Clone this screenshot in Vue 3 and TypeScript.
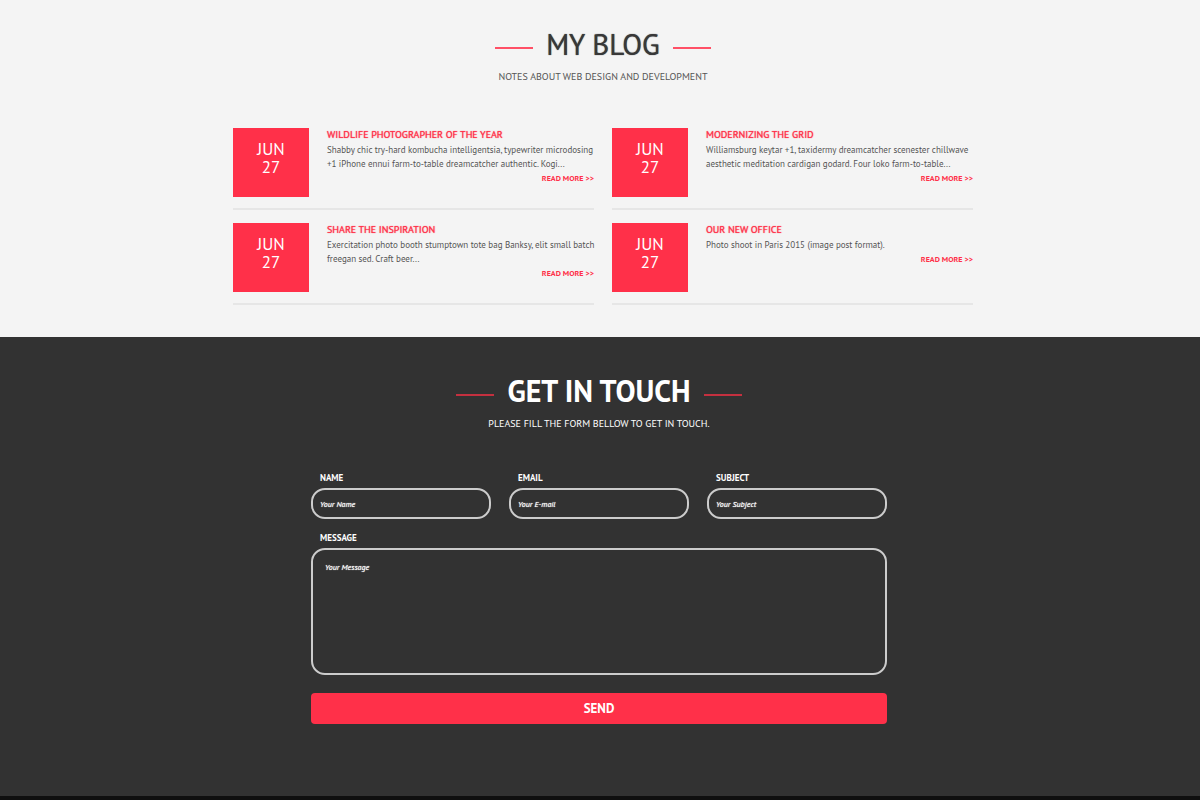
<script setup lang="ts">
import { ref } from 'vue'

interface Post {
  month: string
  day: string
  title: string
  excerpt: string
}

const posts: Post[] = [
  {
    month: 'JUN',
    day: '27',
    title: 'Wildlife photographer of the year',
    excerpt:
      'Shabby chic try-hard kombucha intelligentsia, typewriter microdosing +1 iPhone ennui farm-to-table dreamcatcher authentic. Kogi...',
  },
  {
    month: 'JUN',
    day: '27',
    title: 'Modernizing the grid',
    excerpt:
      'Williamsburg keytar +1, taxidermy dreamcatcher scenester chillwave aesthetic meditation cardigan godard. Four loko farm-to-table...',
  },
  {
    month: 'JUN',
    day: '27',
    title: 'Share the inspiration',
    excerpt:
      'Exercitation photo booth stumptown tote bag Banksy, elit small batch freegan sed. Craft beer...',
  },
  {
    month: 'JUN',
    day: '27',
    title: 'Our new office',
    excerpt: 'Photo shoot in Paris 2015 (image post format).',
  },
]

const fields = [
  { id: 'name', label: 'Name', type: 'text', placeholder: 'Your Name' },
  { id: 'email', label: 'Email', type: 'email', placeholder: 'Your E-mail' },
  { id: 'subject', label: 'Subject', type: 'text', placeholder: 'Your Subject' },
]

const values = ref<Record<string, string>>({ name: '', email: '', subject: '' })
const message = ref('')
</script>

<template>
  <main class="page">
    <section class="blog">
      <header class="heading">
        <h2>My Blog</h2>
        <p>Notes about web design and development</p>
      </header>
      <div class="posts">
        <article v-for="post in posts" :key="post.title" class="post">
          <time class="date">
            <span>{{ post.month }}</span>
            <span>{{ post.day }}</span>
          </time>
          <div class="body">
            <h3>{{ post.title }}</h3>
            <p>{{ post.excerpt }}</p>
            <a href="#">Read more &gt;&gt;</a>
          </div>
        </article>
      </div>
    </section>

    <section class="contact">
      <header class="heading">
        <h2>Get in touch</h2>
        <p>Please fill the form bellow to get in touch.</p>
      </header>
      <form class="form" @submit.prevent>
        <div class="row">
          <div v-for="field in fields" :key="field.id" class="field">
            <label :for="field.id">{{ field.label }}</label>
            <input
              :id="field.id"
              v-model="values[field.id]"
              :type="field.type"
              :placeholder="field.placeholder"
            />
          </div>
        </div>
        <div class="field">
          <label for="message">Message</label>
          <textarea id="message" v-model="message" placeholder="Your Message"></textarea>
        </div>
        <button type="submit">Send</button>
      </form>
    </section>
    <footer class="footer"></footer>
  </main>
</template>

<style>
body {
  margin: 0;
  background: #0f0f0f;
}
</style>

<style scoped>
.page {
  font-family: 'PT Sans', 'Noto Sans', sans-serif;
  font-size: 9px;
  color: #555;
}
.page * {
  box-sizing: border-box;
}
h2,
h3,
p {
  margin: 0;
}
.blog {
  padding: 26px 20px 32px 26px;
  background: #f4f4f4;
}
.heading {
  text-align: center;
  text-transform: uppercase;
}
.heading h2 {
  display: flex;
  align-items: center;
  justify-content: center;
  gap: 13px;
  font-size: 29px;
  line-height: 36px;
  font-weight: 400;
  color: #383838;
  text-shadow: 0 0 1px currentColor;
}
.heading h2::before,
.heading h2::after {
  content: '';
  width: 38px;
  height: 2px;
  margin-top: 8px;
  background: #ff5066;
}
.heading p {
  margin-top: 8px;
  font-size: 10px;
  line-height: 14px;
}
.posts {
  display: grid;
  grid-template-columns: 1fr 1fr;
  gap: 13px 18px;
  max-width: 740px;
  margin: 44px auto 0;
}
.post {
  display: flex;
  align-items: flex-start;
  gap: 18px;
  padding-bottom: 11px;
  border-bottom: 2px solid #e6e6e6;
}
.date {
  flex: none;
  display: flex;
  flex-direction: column;
  width: 76px;
  height: 69px;
  padding-top: 12px;
  background: #ff3049;
  color: #fff;
  font-size: 17px;
  line-height: 18px;
  text-align: center;
}
.body {
  flex: 1;
  display: flex;
  flex-direction: column;
  line-height: 14px;
}
.body h3 {
  margin-bottom: 1px;
  font-size: 10px;
  line-height: 14px;
  font-weight: 400;
  text-transform: uppercase;
  color: #ff3049;
  text-shadow: 0 0 1px currentColor;
}
.body p {
  margin-right: -6px;
}
.body a {
  align-self: flex-end;
  font-size: 8px;
  font-weight: 600;
  text-transform: uppercase;
  text-decoration: none;
  color: #ff3049;
}
.contact {
  padding: 36px 20px 72px 18px;
  background: #323232;
  color: #fff;
}
.contact .heading h2 {
  font-size: 30px;
  font-weight: 600;
  color: #fff;
  text-shadow: none;
}
.contact .heading h2::before,
.contact .heading h2::after {
  background: #c4303f;
}
.form {
  display: flex;
  flex-direction: column;
  max-width: 576px;
  margin: 41px auto 0;
}
.row {
  display: grid;
  grid-template-columns: repeat(3, 1fr);
  gap: 18px;
  margin-bottom: 13px;
}
.field {
  display: flex;
  flex-direction: column;
  min-width: 0;
}
.field label {
  padding-left: 9px;
  margin-bottom: 4px;
  line-height: 12px;
  font-weight: 600;
  text-transform: uppercase;
}
input,
textarea {
  width: 100%;
  border: 2px solid #ccc;
  border-radius: 14px;
  background: transparent;
  color: #fff;
  font-family: inherit;
  font-size: 8px;
  font-style: italic;
  outline: none;
}
input {
  height: 31px;
  padding: 0 7px;
}
textarea {
  display: block;
  height: 127px;
  padding: 11px 12px;
  line-height: 12px;
  resize: none;
}
input::placeholder,
textarea::placeholder {
  color: #fff;
  opacity: 1;
  text-shadow: 0 0 1px currentColor;
}
button {
  height: 31px;
  margin-top: 18px;
  border: 0;
  border-radius: 4px;
  background: #ff3049;
  color: #fff;
  font-family: inherit;
  font-size: 13px;
  font-weight: 600;
  text-transform: uppercase;
}
.footer {
  height: 4px;
  background: #0f0f0f;
}
</style>
